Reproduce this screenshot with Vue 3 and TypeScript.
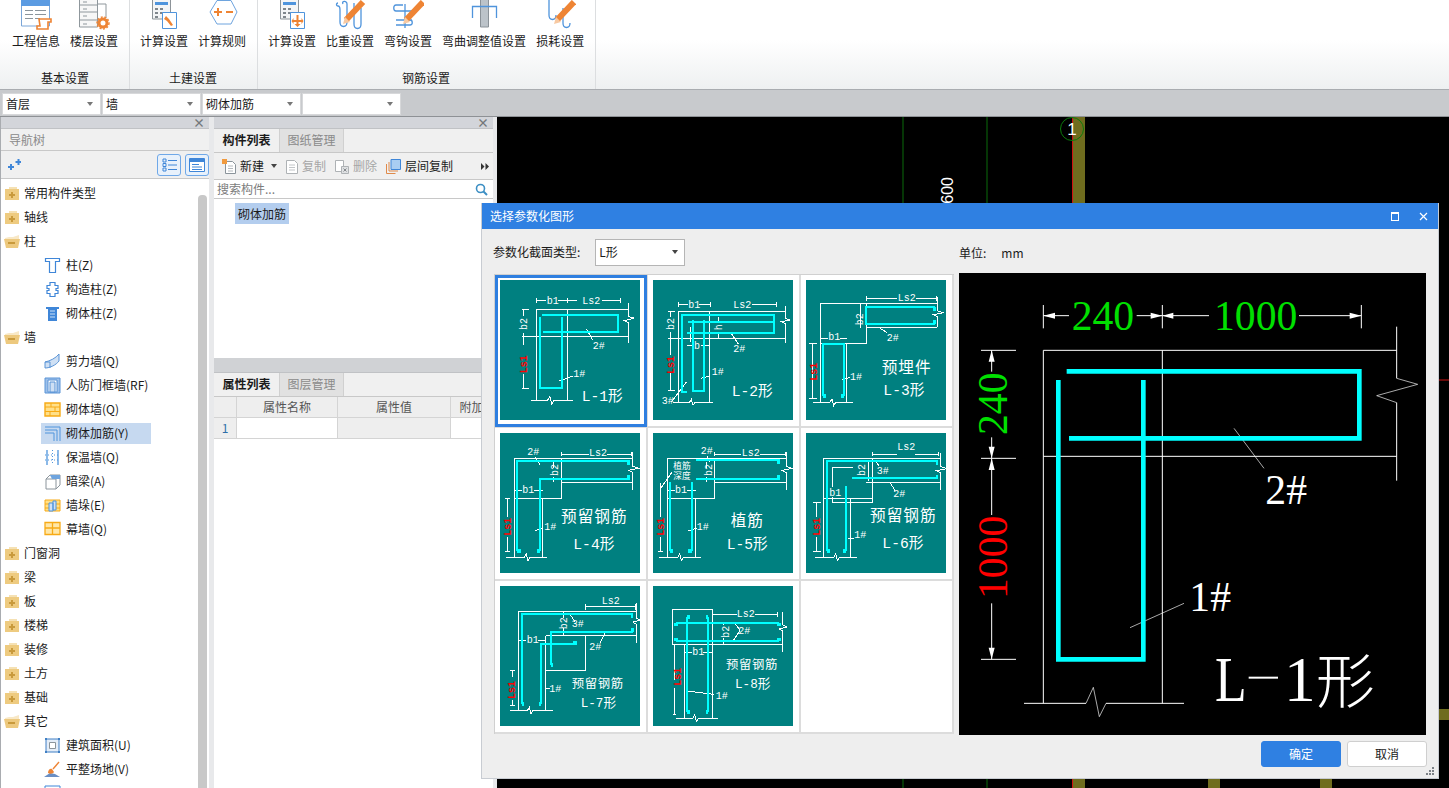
<script setup lang="ts">
// --- Ribbon ---
const pencil = (x: number, y: number) =>
  `<path d="M${x} ${y}l17-18" stroke="#ee8434" stroke-width="6" fill="none"/><path d="M${x - 3} ${y + 4}l2-7 5 5z" fill="#f7c9a2"/>`
const calc =
  '<path d="M4.5 -3h18v22h-18z" fill="#f4f5f6" stroke="#8d9499"/><path d="M7 2h13v3H7z" fill="#4f94dc"/><path d="M7 8h3v2H7zm5 0h3v2h-3zM7 12h3v2H7zm5 0h3v2h-3zM7 16h3v2H7z" fill="#7f868c"/><path d="M14.5 12.5h14v16h-14z" fill="#fff" stroke="#4f94dc"/>'

const ribbonIcons: Record<string, string> = {
  info: '<path d="M1.5 -3h28v29h-28z" fill="#fff" stroke="#7ba6d8"/><path d="M1 0h29v6H1z" fill="#5b9be2"/><path d="M5 10h8v1H5zm10 0h11v1H15zM5 14h8v1H5zm10 0h11v1H15zM5 18h8v1H5zm10 0h5v1h-5z" fill="#8b949b"/><path d="M19 19h12v3h-3v7H17v-3h3z" fill="#fff" stroke="#ee8434" stroke-width="1.6"/>',
  floor: '<path d="M1.5 -3h18v30h-18z" fill="#f7f7f7" stroke="#8f979c"/><path d="M19 4h9v14" fill="none" stroke="#8f979c"/><path d="M2 5h17M2 12h17M2 20h17" stroke="#8f979c"/><path d="M5 2h4M5 9h4M5 16h4M5 24h4" stroke="#8f979c"/><circle cx="25" cy="23" r="4" fill="#fff" stroke="#ee8434" stroke-width="3"/><circle cx="25" cy="23" r="6" fill="none" stroke="#ee8434" stroke-width="1.4" stroke-dasharray="2 1.6"/>',
  calcTool: calc + '<path d="M18 16l3 3 4 6-2 1-4-5-3-2z" fill="#ee8434"/>',
  rule: '<path d="M4 12L11 .5h14L31 12l-6 12H11z" fill="#fff" stroke="#6ea4de"/><path d="M8 11h3V8h2v3h3v2h-3v3h-2v-3H8zm12 0h7v2h-7z" fill="#ee8434"/>',
  calcRebar: calc + '<path d="M20.5 15h2v5h3v-2l2 3-2 3v-2h-3v2h2l-3 3-3-3h2v-2h-3v2l-2-3 2-3v2h3z" fill="#ee8434"/>',
  density:
    '<path d="M4 3c-2 0-2 3 0 3s2 2 2 4v12c0 6 7 6 7 0V4c0-4-6-3-4 0M20 3v21c0 6 7 6 7 0V8" fill="none" stroke="#4f94dc" stroke-width="1.3"/>' + pencil(12, 20),
  hook:
    '<path d="M11 5H4c-3 0-3 6 0 6h16M4 20h16M4 25h14c3 0 3-5 0-5M13 4v24" fill="none" stroke="#4f94dc" stroke-width="1.3"/>' + pencil(14, 20),
  bend: '<path d="M12.5 -2h8v29h-8z" fill="#bcc3c9" stroke="#8b9298"/><path d="M4.5 18V6.5h24V18" fill="none" stroke="#4f94dc" stroke-width="1.3"/>',
  loss:
    '<path d="M5 0v15c0 6 7 6 7 0M19 8v15c0 6 7 6 7 0" fill="none" stroke="#4f94dc" stroke-width="1.3"/>' + pencil(13, 20),
}

const groups = [
  { name: '基本设置', cls: 'first', items: [['工程信息', 'info'], ['楼层设置', 'floor']] },
  { name: '土建设置', cls: '', items: [['计算设置', 'calcTool'], ['计算规则', 'rule']] },
  {
    name: '钢筋设置',
    cls: '',
    items: [['计算设置', 'calcRebar'], ['比重设置', 'density'], ['弯钩设置', 'hook'], ['弯曲调整值设置', 'bend'], ['损耗设置', 'loss']],
  },
]

const combos = ['首层', '墙', '砌体加筋', '']

// --- Navigation tree ---
const treeIcons: Record<string, string> = {
  plus: '<path fill="#f5e1b4" d="M5 2h8v2H5z"/><path fill="#eecb80" d="M1 4h14v11H1z"/><path fill="#c99a3c" d="M7 7h2v2h2v2H9v2H7v-2H5V9h2z"/>',
  minus: '<path fill="#f8e8c6" d="M1 5l4-1h4l6-2v4H1z"/><path fill="#edc97e" d="M0 6h16l-2 9H2z"/><path fill="#c99a3c" d="M4 9h7v2H4z"/>',
  col: '<path d="M1.5 1.5h14v3h-4v11h-6v-11h-4z" fill="#fff" stroke="#3f86d8" stroke-width="1.2"/>',
  gz: '<path d="M6 1.5h5v3h3v3h-2v2h2v3h-3v3H6v-3H3V9.500h2v-2H3v-3h3z" fill="#fff" stroke="#3f86d8" stroke-width="1.2"/>',
  qtz: '<path d="M2 2h13v2h-2v12H4V4H2z" fill="#3f86d8"/><path d="M6 6h5M6 9h5M6 12h5" stroke="#cfe2f7"/>',
  jlq: '<path d="M1 9C6 8 12 5 15 1v7c-3 4-9 7-14 7z" fill="#cfe0f4" stroke="#5a94d6"/><path d="M1 9h5v6" fill="none" stroke="#5a94d6"/>',
  rfm: '<path d="M1 1h15v15H1z" fill="#9dc0ea" stroke="#5a94d6"/><path d="M4 3h9v12H4z" fill="#fff" stroke="#5a94d6"/><path d="M6 5h5v10H6z" fill="#cfe0f4" stroke="#5a94d6"/>',
  qtq: '<path d="M1 2h15v13H1z" fill="#ffe08a" stroke="#f7aa16" stroke-width="1.400"/><path d="M1 6h15M1 10.500h15M7 2v4M11 6v4.500M6 10.500V15" stroke="#f7aa16"/>',
  jj: '<path d="M1 2h15v14M1 5h12v11M1 8h9v8" fill="none" stroke="#4f94dc"/>',
  bwq: '<path d="M3 1v15M14 1v15" stroke="#4f94dc" stroke-width="1.300"/><path d="M8.500 1v15M1 6h15M1 11h15" stroke="#4f94dc" stroke-dasharray="1 2" fill="none"/>',
  al: '<path d="M2 6l4-4h10v10l-4 4H2z" fill="#fff" stroke="#8b949b"/><path d="M2 6h10v10M12 6l4-4" fill="none" stroke="#8b949b"/><path d="M6 2h10v4H8z" fill="#6ea4de"/>',
  qd: '<path d="M1 3h15v11H1z" fill="#ffe08a" stroke="#f7aa16"/><path d="M1 7h15M1 11h15" stroke="#f7aa16"/><path d="M5 6h4v8H5z M9 4h3v9H9z" fill="#cfe0f4" stroke="#4f94dc"/>',
  mq: '<path d="M1 1.500h15v12H1z" fill="#ffe7a8" stroke="#f7aa16" stroke-width="1.300"/><path d="M1 7h15M8.500 1.500v12" stroke="#f7aa16" stroke-width="1.300"/>',
  area: '<path d="M2 2h13v13H2z" fill="#e4edf8" stroke="#3f7fc4"/><path d="M5.500 5.500h6v6h-6z" fill="#fff" stroke="#8b949b"/><path d="M1 1h2v2H1zm13 0h2v2h-2zM1 14h2v2H1zm13 0h2v2h-2z" fill="#3f7fc4"/>',
  site: '<path d="M0 16l6-4 5 1 5 3z" fill="#6a8fc4"/><path d="M4 12c0-3 2-5 4-4l2 3c-1 2-4 2-6 1z" fill="#ee8434"/><path d="M9 8l6-7" stroke="#ee8434" stroke-width="1.400"/>',
  box: '<path d="M1 1h15v15H1z" fill="#fff" stroke="#3f86d8"/>',
}

const tree = [
  ['常用构件类型', 'plus'], ['轴线', 'plus'], ['柱', 'minus'],
  ['柱(Z)', 'col', 1], ['构造柱(Z)', 'gz', 1], ['砌体柱(Z)', 'qtz', 1],
  ['墙', 'minus'],
  ['剪力墙(Q)', 'jlq', 1], ['人防门框墙(RF)', 'rfm', 1], ['砌体墙(Q)', 'qtq', 1], ['砌体加筋(Y)', 'jj', 2],
  ['保温墙(Q)', 'bwq', 1], ['暗梁(A)', 'al', 1], ['墙垛(E)', 'qd', 1], ['幕墙(Q)', 'mq', 1],
  ['门窗洞', 'plus'], ['梁', 'plus'], ['板', 'plus'], ['楼梯', 'plus'], ['装修', 'plus'], ['土方', 'plus'], ['基础', 'plus'],
  ['其它', 'minus'], ['建筑面积(U)', 'area', 1], ['平整场地(V)', 'site', 1], ['', 'box', 1],
] as [string, string, number?][]

// --- Parametric thumbnails, drawn in 3x units ---
interface Label { x: number; y: number; t: string; k: string }
const L = (x: number, y: number, t: string, k = 's'): Label => ({ x, y, t, k })

const thumbs = [
  {
    ox: 30, oy: 30,
    w: 'M140 84v16M232 84v16M390 84v16M140 92h28M205 92h55M335 92h55M138 118H415M95 200H415M138 118V392M232 118V392M415 100v40l18 4-30 8 12 6v62M122 392h50l8-12 5 22 6-10h57M95 118h23M95 355h23M100 118v20M100 190v35M100 312v43M290 178l18 32M208 333l40-15',
    c: 'M155 134H385V186H160M150 142V355H217V142',
    l: [L(170, 102, 'b1'), L(277, 102, 'Ls2'), L(111, 162, 'b2', 'v'), L(111, 283, 'Ls1', 'red'), L(308, 236, '2#'), L(250, 320, '1#'), L(275, 392, 'L-1形', 'cap')],
  },
  {
    ox: 489, oy: 30,
    w: 'M565 96v16M660 96v16M858 96v16M565 104h28M628 104h32M785 104h73M565 125H885M535 206H885M565 125V398M658 125V398M885 108v36l14 6-24 5 10 6v59M550 398h48l6-10 5 18 6-8h55M535 125h20M535 206h20M535 362h20M541 125v15M541 185v70M541 310v52M685 142v14M685 185v18M590 226h20M632 226h28M632 325l28-7M720 185l25 37M590 335l-45 60M600 170v45',
    c: 'M853 157V134H577V365H590M595 157H853V190H590M608 150V362H642V150',
    l: [L(595, 114, 'b1'), L(730, 114, 'Ls2'), L(552, 162, 'b2', 'v'), L(552, 285, 'Ls1', 'red'), L(697, 172, 'h', 'v'), L(612, 236, 'b'), L(665, 315, '1#'), L(730, 245, '2#'), L(515, 402, '3#'), L(725, 378, 'L-2形', 'cap')],
  },
  {
    ox: 818, oy: 30,
    w: 'M1000 78v14M1208 78v14M1000 85h92M1148 85h60M862 100H1210M1000 100V220M862 220H1000M862 100V397M940 220V397M1000 172H1212M1212 82v40l18 6-30 6 12 6v32M840 397h50l6-10 5 20 6-10h53M980 100v75M838 220v165M826 220h24M826 385h24M862 205h22M920 205h22M925 330l25-8M1040 175l22 13',
    c: 'M1205 112H998V162H1205M868 378V222H932V378',
    b: 'M1198 118h9M1198 156h9M868 378h10M932 378h-10',
    l: [L(885, 210, 'b1'), L(1093, 92, 'Ls2'), L(990, 148, 'b2', 'v'), L(850, 305, 'Ls1', 'red'), L(950, 330, '1#'), L(1060, 212, '2#'), L(1045, 308, '预埋件', 'big'), L(1050, 375, 'L-3形', 'cap')],
  },
  {
    ox: 30, oy: 24,
    w: 'M215 80v14M425 80v14M215 87h82M350 87h75M72 100H428M215 172H428M72 220H215M72 100V397M215 100V220M158 220V397M428 80v44l18 6-30 6 12 6v53M48 397h55l6-10 5 20 6-10h52M52 220v55M52 335v45M44 220h16M44 380h16M72 197h24M132 197h26M190 112v16M190 155v17M135 317l25-7M135 97l15 21',
    c: 'M82 378V108H420M150 378V163H420',
    b: 'M82 378h10M150 378h-10M412 114h8M412 157h8',
    l: [L(112, 90, '2#'), L(97, 205, 'b1'), L(297, 92, 'Ls2'), L(205, 135, 'b2', 'v'), L(63, 305, 'Ls1', 'red'), L(163, 315, '1#'), L(213, 290, '预留钢筋', 'big'), L(250, 372, 'L-4形', 'cap')],
  },
  {
    ox: 489, oy: 24,
    w: 'M672 80v14M885 80v14M672 87h82M810 87h75M532 100H888M674 172H888M532 220H674M532 100V397M674 100V220M617 220V397M888 80v44l18 6-30 6 12 6v53M508 397h55l6-10 5 20 6-10h52M512 175v100M512 335v45M504 380h16M532 197h22M590 197h27M650 112v16M650 155v17M595 317l25-7M650 92l10 18M512 190l35-50',
    c: 'M618 106H870M618 162H870M540 172V378M605 172V378',
    b: 'M540 378h10M605 378h-10M862 112h8M862 157h8',
    l: [L(632, 86, '2#'), L(755, 92, 'Ls2'), L(550, 133, '植筋', 'mini'), L(550, 162, '深度', 'mini'), L(666, 135, 'b2', 'v'), L(555, 205, 'b1'), L(523, 305, 'Ls1', 'red'), L(620, 315, '1#'), L(722, 302, '植筋', 'big'), L(710, 372, 'L-5形', 'cap')],
  },
  {
    ox: 818, oy: 24,
    w: 'M1018 80v14M1215 80v14M1018 87h72M1145 87h70M870 100H1222M998 172H1222M870 100V397M952 220V397M870 220H1018M1018 100V232M897 128H960M897 128V185M897 215V232M897 232H1018M1222 85v40l18 6-30 6 12 6v52M846 397h55l6-10 5 20 6-10h52M850 232v45M850 335v45M838 232h24M838 380h24M1005 112v55M945 340h18M1025 105l12 18M1070 172l15 25',
    c: 'M880 378V108H1215M955 158H1215M938 183V378',
    b: 'M880 378h10M938 378h-10M1207 114h8M1207 157h8',
    l: [L(888, 212, 'b1'), L(1092, 74, 'Ls2'), L(996, 135, 'b2', 'v'), L(1030, 146, '3#'), L(1080, 217, '2#'), L(861, 305, 'Ls1', 'red'), L(963, 340, '1#'), L(1010, 288, '预留钢筋', 'big'), L(1047, 368, 'L-6形', 'cap')],
  },
  {
    ox: 30, oy: 33,
    w: 'M287 88v16M435 88v16M287 95h150M85 109H438M167 182H438M85 109V407M167 182V407M287 182V287H167M438 85v44l14 6-24 6 10 6v58M60 407h52l6-10 5 20 6-10h60M220 109v20M220 160v22M60 285h14M60 390h14M66 285v20M66 375v15M85 195h24M145 195h22M167 340h12M240 118l15 22M345 175l-15 30',
    c: 'M95 388V117H430M182 270V170H430M153 388V207H260',
    b: 'M95 388h6M153 388h-6M182 270h6M424 124h6M424 166h8M256 197v8',
    l: [L(335, 86, 'Ls2'), L(231, 145, 'b2', 'v'), L(245, 155, '3#'), L(298, 226, '2#'), L(110, 203, 'b1'), L(178, 350, '1#'), L(76, 345, 'Ls1', 'red'), L(245, 338, '预留钢筋', 'big2'), L(272, 395, 'L-7形', 'cap2')],
  },
  {
    ox: 489, oy: 33,
    w: 'M547 103H667V209H547ZM667 118H740M795 118H862M862 110v16M667 209H878M878 110v40l14 6-24 6 10 6v62M583 209V430M667 209V430M558 430h50l6-10 5 20 6-10h58M553 209v105M553 340v78M548 418h10M583 232h22M640 232h27M700 140v10M700 188v21M735 145l15 20M730 197l20-30M592 348l80 10',
    c: 'M557 145H868M557 197H868M592 125V410M655 125V410',
    b: 'M557 152v-7M868 152v-7M557 190v7M868 190v7M592 125h8M655 125h-8M592 410h8M655 410h-8',
    l: [L(740, 125, 'Ls2'), L(716, 170, 'b2', 'v'), L(745, 178, '2#'), L(607, 240, 'b1'), L(573, 305, 'Ls1', 'red'), L(677, 373, '1#'), L(708, 282, '预留钢筋', 'big2'), L(735, 338, 'L-8形', 'cap2')],
  },
]
</script>

<template>
  <div class="app">
    <header class="ribbon">
      <section v-for="g in groups" :key="g.name" class="group" :class="g.cls">
        <div class="tools">
          <div v-for="it in g.items" :key="it[1]" class="tool">
            <svg class="tool-icon" viewBox="0 0 32 30" width="32" height="30" v-html="ribbonIcons[it[1]]" />
            <span>{{ it[0] }}</span>
          </div>
        </div>
        <div class="group-name">{{ g.name }}</div>
      </section>
    </header>

    <div class="combo-bar">
      <div v-for="(c, i) in combos" :key="i" class="combo">
        <span>{{ c }}</span><i class="caret" />
      </div>
    </div>

    <main class="main">
      <aside class="nav">
        <div class="strip"><b class="close">×</b></div>
        <div class="nav-title">导航树</div>
        <div class="nav-tools">
          <svg width="13" height="11" viewBox="0 0 13 11"><path d="M7.500 2h2V0h2v2H13v2h-1.500v2h-2V4h-2zM0 7h2V5h2v2h2v2H4v2H2V9H0z" fill="#3f86d8" /></svg>
          <span class="spacer" />
          <button class="view-btn" type="button">
            <svg width="15" height="14" viewBox="0 0 15 14"><path d="M1 1h3v3H1zM1 5.500h3v3H1zM1 10h3v3H1z" fill="none" stroke="#3f86d8" /><path d="M6 2.500h9M6 7h9M6 11.500h9" stroke="#3f86d8" /></svg>
          </button>
          <button class="view-btn" type="button">
            <svg width="16" height="14" viewBox="0 0 16 14"><path d="M.5.500h15v13H.5z" fill="#fff" stroke="#3f86d8" /><path d="M1 1h14v3H1z" fill="#3f86d8" /><path d="M3 6.500h7M3 9h10M3 11.500h10" stroke="#3f86d8" /></svg>
          </button>
        </div>
        <div class="tree">
          <div v-for="(n, i) in tree" :key="i" class="row" :class="{ child: n[2], sel: n[2] === 2 }">
            <div class="row-in">
              <svg class="row-icon" viewBox="0 0 17 17" width="17" height="17" v-html="treeIcons[n[1]]" />
              <span>{{ n[0] }}</span>
            </div>
          </div>
          <i class="scroll" />
        </div>
      </aside>

      <section class="mid">
        <div class="strip"><b class="close">×</b></div>
        <div class="tabs">
          <span class="tab on">构件列表</span><span class="tab">图纸管理</span>
        </div>
        <div class="mid-tools">
          <span class="mt">
            <svg width="14" height="15" viewBox="0 0 14 15"><path d="M3.500 2.500h7l3 3v9h-10z" fill="#fff" stroke="#8b949b" /><path d="M6 7h5M6 9.500h5M6 12h5" stroke="#b4b9bd" /><path d="M0 0h5v5H0z" fill="#f19a3e" /></svg>
            新建 <i class="caret dark" />
          </span>
          <span class="mt off">
            <svg width="12" height="15" viewBox="0 0 12 15"><path d="M.5 1.500h8l3 3v10H.5z" fill="#fff" stroke="#aeb2b5" /><path d="M3 6h6M3 8.500h6M3 11h6" stroke="#c2c5c8" /></svg>
            复制
          </span>
          <span class="mt off">
            <svg width="14" height="15" viewBox="0 0 14 15"><path d="M.5 1.500h8v11h-8z" fill="#fff" stroke="#aeb2b5" /><path d="M6.500 7.500h7v7h-7z" fill="#dfe1e3" stroke="#aeb2b5" /><path d="M8.500 9.500l3 3m0-3l-3 3" stroke="#85898d" /></svg>
            删除
          </span>
          <span class="mt">
            <svg width="15" height="15" viewBox="0 0 15 15"><path d="M.5 5v9.500h9M3 3v9h9" fill="none" stroke="#e08a4a" /><path d="M5 .5h9.500v10H5z" fill="#a9cdf2" stroke="#3f86d8" /></svg>
            层间复制
          </span>
          <span class="spacer" />
          <svg width="8" height="7" viewBox="0 0 8 7"><path d="M0 0l3.500 3.500L0 7zM4.500 0L8 3.500 4.500 7z" fill="#333" /></svg>
        </div>
        <div class="search">
          <span>搜索构件...</span>
          <svg width="13" height="13" viewBox="0 0 13 13"><circle cx="5.500" cy="5.500" r="4" fill="none" stroke="#3d8fc4" stroke-width="1.600" /><path d="M8.500 8.500l3.500 3.500" stroke="#3d8fc4" stroke-width="2" /></svg>
        </div>
        <div class="comp-list"><span class="comp">砌体加筋</span></div>
        <div class="sash" />
        <div class="tabs">
          <span class="tab on">属性列表</span><span class="tab">图层管理</span>
        </div>
        <div class="props">
          <div class="prop-row head">
            <span class="c0" /><span class="c1">属性名称</span><span class="c2">属性值</span><span class="c3">附加</span>
          </div>
          <div class="prop-row">
            <span class="c0 num">1</span><span class="c1 blank" /><span class="c2 grey" /><span class="c3 blank" />
          </div>
        </div>
      </section>

      <div class="canvas">
        <svg class="cad" viewBox="0 0 952 671" width="952" height="671">
          <path d="M406 0V671M490 0V671" stroke="#0b6a0b" fill="none" />
          <path d="M576 0h12v671h-12z" fill="#6f6c1e" />
          <path d="M575.500 0V671" stroke="#d01212" />
          <circle cx="575" cy="12" r="11.500" fill="none" stroke="#0b7a0b" />
          <text x="575" y="18" class="cad-t one">1</text>
          <text x="0" y="0" class="cad-t six" transform="translate(456 60) rotate(-90)" text-anchor="end">3600</text>
          <path d="M711 660h12v11h-12zM823 660h12v11h-12zM942 592h10v11h-10z" fill="#6f6c1e" />
          <path d="M940 263h12" stroke="#d01212" />
        </svg>
      </div>
    </main>

    <div class="dialog">
      <div class="dlg-title">
        <span>选择参数化图形</span>
        <span class="spacer" />
        <i class="dlg-max" />
        <svg class="dlg-x" width="9" height="9" viewBox="0 0 9 9"><path d="M1 1l7 7m0-7l-7 7" stroke="#fff" stroke-width="1.200" /></svg>
      </div>
      <div class="dlg-body">
        <div class="dlg-left-top">
          <span>参数化截面类型:</span>
          <div class="type-select"><span>L形</span><i class="caret dark" /></div>
        </div>
        <div class="dlg-unit"><span>单位:</span><span>mm</span></div>

        <div class="grid">
          <div v-for="(t, i) in thumbs" :key="i" class="cell" :class="{ picked: i === 0 }">
            <svg class="thumb" :viewBox="`${t.ox} ${t.oy} 420 420`" width="140" height="140">
              <path :d="t.w" class="w" />
              <path :d="t.c" class="c" />
              <path v-if="t.b" :d="t.b" class="blob" />
              <text
                v-for="(x, j) in t.l" :key="j" :x="x.x" :y="x.y" :class="x.k"
                :transform="x.k === 'v' || x.k === 'red' ? `rotate(-90 ${x.x} ${x.y})` : undefined"
              >{{ x.t }}</text>
            </svg>
          </div>
          <div class="cell" />
        </div>

        <div class="preview">
          <svg viewBox="-3 -6 1404 1386" width="468" height="462">
            <path class="thin" d="M250 90v70M607 90v70M1204 90v70M250 122h77M530 122h77M607 122h140M1017 122h187M250 226H1310M250 544H1310M250 226V1285M607 226V1285M1310 155V310M1310 383V617M192 1285H378M438 1285H672M63 226H168M63 550H168M63 1153H168M95 226v64M95 487v63M95 550v170M95 985v168" />
            <path class="hair" d="M510 1058L672 985M822 460L912 580M1310 310l63 18-123 34 60 21M378 1285L400 1237 418 1325 438 1285" />
            <path class="arrow" d="M250 122l35-9v18zM607 122l-35-9v18zM607 122l33-9v18zM1204 122l-35-9v18zM95 226l-9 34h18zM95 550l-9-35h18zM95 550l-9 35h18zM95 1153l-9-35h18z" />
            <path class="bar" d="M320 289H1198V490H327M295 315V1153H550V315" />
            <text x="335" y="165" class="dim green">240</text>
            <text x="762" y="165" class="dim green">1000</text>
            <text x="141" y="480" class="dim green" transform="rotate(-90 141 480)">240</text>
            <text x="141" y="972" class="dim red-t" transform="rotate(-90 141 972)">1000</text>
            <text x="688" y="1008" class="dim white">1#</text>
            <text x="916" y="688" class="dim white">2#</text>
            <text x="765" y="1278" class="title white" textLength="95" lengthAdjust="spacingAndGlyphs">L</text>
            <path class="bar-w" d="M866 1208h88" />
            <text x="972" y="1278" class="title white">1</text>
            <text x="1068" y="1283" class="title-cn">形</text>
          </svg>
        </div>
      </div>
      <div class="dlg-foot">
        <button class="btn primary" type="button">确定</button>
        <button class="btn" type="button">取消</button>
      </div>
      <svg class="grip" width="9" height="9" viewBox="0 0 9 9"><path d="M6 0h2v2H6zM3 3h2v2H3zM6 3h2v2H6zM0 6h2v2H0zM3 6h2v2H3zM6 6h2v2H6z" fill="#7d8287" /></svg>
    </div>
  </div>
</template>

<style>
html, body { margin: 0; overflow: hidden; background: #000; }
</style>

<style scoped>
.app {
  position: relative;
  width: 1449px;
  height: 788px;
  display: flex;
  flex-direction: column;
  overflow: hidden;
  font: 12px/16px "Noto Sans CJK SC", "Liberation Sans", sans-serif;
  color: #1b1b1b;
  background: #e8e9eb;
}
.spacer { flex: 1; }

/* ribbon */
.ribbon {
  height: 89px;
  flex: none;
  display: flex;
  background: linear-gradient(#fff 45%, #eef0f1);
  border-bottom: 1px solid #a9acb0;
}
.group {
  display: flex;
  flex-direction: column;
  padding: 0 11px 0 10px;
  border-right: 1px solid #dcdee0;
}
.group.first { padding-left: 12px; }
.tools { display: flex; gap: 10px; height: 70px; }
.tool { display: flex; flex-direction: column; align-items: center; }
.tool-icon { display: block; flex: none; margin-bottom: 3px; overflow: hidden; }
.group-name { text-align: center; line-height: 16px; }

/* combos */
.combo-bar {
  height: 27px;
  flex: none;
  display: flex;
  gap: 1px;
  padding: 3px 2px 0;
  box-sizing: border-box;
  background: #c8cacd;
  border-bottom: 1px solid #8e9195;
}
.combo {
  width: 99px;
  height: 22px;
  box-sizing: border-box;
  display: flex;
  align-items: center;
  justify-content: space-between;
  padding: 0 7px 0 3px;
  background: #fff;
  border: 1px solid #d7d8da;
}
.caret {
  width: 0;
  height: 0;
  border: 3px solid transparent;
  border-top: 4px solid #777;
  border-bottom: 0;
}
.caret.dark { border-top-color: #444; }

/* panels */
.main { flex: 1; display: flex; min-height: 0; }
.strip {
  height: 12px;
  box-sizing: border-box;
  background: #d3d5da;
  border-bottom: 1px solid #c0c2c5;
  display: flex;
  justify-content: flex-end;
}
.close {
  font-size: 12px;
  line-height: 11px;
  color: #73777b;
  margin-right: 4px;
}
.nav {
  width: 208px;
  flex: none;
  margin-right: 5px;
  border-left: 1px solid #a9acb0;
  background: #fff;
  display: flex;
  flex-direction: column;
}
.nav-title {
  height: 21px;
  line-height: 21px;
  padding-left: 8px;
  color: #8a8a8a;
  background: #f0f0f0;
  border-bottom: 1px solid #c8c8c8;
}
.nav-tools {
  height: 27px;
  display: flex;
  align-items: center;
  gap: 4px;
  padding: 0 0 0 7px;
  background: #f0f0f0;
  border-bottom: 1px solid #c8c8c8;
}
.view-btn {
  width: 24px;
  height: 22px;
  padding: 0;
  display: flex;
  align-items: center;
  justify-content: center;
  background: #e8f1fb;
  border: 1px solid #6fa8e8;
  border-radius: 3px;
}
.tree { position: relative; flex: 1; min-height: 0; overflow: hidden; padding-top: 2px; }
.row { height: 24px; display: flex; align-items: center; padding-left: 3px; }
.row-in { display: flex; align-items: center; gap: 3px; height: 21px; }
.row-icon { flex: none; }
.row.child { padding-left: 40px; }
.row.child .row-in { padding-left: 3px; gap: 5px; }
.row.sel .row-in { width: 107px; background: #c6d9f0; }
.scroll {
  position: absolute;
  left: 197px;
  top: 16px;
  bottom: 0;
  width: 9px;
  border-radius: 4px 4px 0 0;
  background: #c8c8c8;
}

.mid {
  width: 279px;
  flex: none;
  margin-right: 4px;
  background: #fff;
  display: flex;
  flex-direction: column;
}
.tabs {
  height: 23px;
  flex: none;
  display: flex;
  background: #f0f0f0;
  border-bottom: 1px solid #c8c8c8;
}
.tab {
  width: 65px;
  text-align: center;
  line-height: 22px;
  color: #8a8a8a;
  background: #e1e1e1;
  border-left: 1px solid #d0d0d0;
  border-right: 1px solid #d0d0d0;
  box-sizing: border-box;
}
.tab.on { background: #f0f0f0; color: #1b1b1b; font-weight: 700; border: 0; }
.mid-tools {
  height: 27px;
  flex: none;
  display: flex;
  align-items: center;
  gap: 6px;
  padding: 0 4px 0 8px;
  background: #f0f0f0;
  border-bottom: 1px solid #c8c8c8;
  box-sizing: border-box;
}
.mt { display: inline-flex; align-items: center; gap: 4px; margin-right: 3px; }
.mt .caret { margin-left: 3px; }
.mt.off { color: #a6a6a6; }
.search {
  height: 19px;
  flex: none;
  display: flex;
  align-items: center;
  justify-content: space-between;
  padding: 0 5px 0 3px;
  color: #7c7c7c;
  border-bottom: 1px solid #c8c8c8;
  box-sizing: border-box;
}
.comp-list { height: 159px; flex: none; padding: 4px 0 0 21px; box-sizing: border-box; }
.comp { display: inline-block; padding: 0 3px; line-height: 21px; background: #b3cdee; }
.sash { height: 15px; flex: none; background: #d0d2d5; border-bottom: 1px solid #c0c2c5; box-sizing: border-box; }
.prop-row { display: flex; height: 21px; line-height: 20px; }
.prop-row span { box-sizing: border-box; border-right: 1px solid #d4d4d4; border-bottom: 1px solid #d4d4d4; text-align: center; color: #555; }
.prop-row.head span { background: #eeeeee; }
.c0 { width: 23px; }
.c1 { width: 101px; }
.c2 { width: 113px; }
.c3 { flex: 1; }
.num { color: #2e6ea8 !important; background: #eee; }
.grey { background: #eee; }

.canvas { flex: 1; background: #000; overflow: hidden; }
.cad { display: block; }
.cad-t { fill: #fff; font-family: "Liberation Sans", sans-serif; }
.one { font-size: 17px; text-anchor: middle; }
.six { font-size: 16px; }

/* dialog */
.dialog {
  position: absolute;
  left: 481px;
  top: 203px;
  width: 958px;
  height: 576px;
  box-sizing: border-box;
  display: flex;
  flex-direction: column;
  background: #eeeeee;
  border: 1px solid #c8ccd2;
  border-top: 0;
}
.dlg-title {
  height: 26px;
  flex: none;
  display: flex;
  align-items: center;
  padding: 0 10px 0 8px;
  color: #fff;
  background: #2f80e2;
}
.dlg-max {
  width: 6px;
  height: 6px;
  margin-right: 20px;
  border: 1px solid #fff;
  border-top-width: 2px;
}
.dlg-body {
  flex: 1;
  display: grid;
  grid-template-columns: 460px 468px;
  grid-template-rows: 44px 461px;
  column-gap: 5px;
  padding-left: 11px;
}
.dlg-left-top { display: flex; align-items: center; gap: 15px; padding-top: 2px; }
.type-select {
  width: 90px;
  height: 27px;
  box-sizing: border-box;
  display: flex;
  align-items: center;
  justify-content: space-between;
  padding: 0 6px 0 3px;
  background: #fff;
  border: 1px solid #b5b5b5;
}
.dlg-unit { display: flex; align-items: center; gap: 15px; padding: 3px 0 0 1px; }
.grid {
  display: grid;
  grid-template-columns: repeat(3, 153px);
  grid-auto-rows: 153px;
  width: 460px;
  height: 460px;
  margin: 1px 0 0 1px;
  box-sizing: border-box;
  background: #fff;
  border-top: 1px solid #d0d0d0;
  border-left: 1px solid #d0d0d0;
}
.cell {
  position: relative;
  box-sizing: border-box;
  padding: 5px;
  border-right: 2px solid #dcdcdc;
  border-bottom: 2px solid #dcdcdc;
}
.cell.picked::after {
  content: "";
  position: absolute;
  inset: 0 -1px -1px 0;
  border: 3px solid #2f7fe0;
}
.thumb { display: block; background: #008080; }
.w { fill: none; stroke: #fff; stroke-width: 3; shape-rendering: crispEdges; }
.c { fill: none; stroke: #00ffff; stroke-width: 6; shape-rendering: crispEdges; }
.blob { fill: none; stroke: #00ffff; stroke-width: 12; shape-rendering: crispEdges; }
.thumb text { fill: #fff; font-family: "Liberation Mono", "Noto Sans CJK SC", monospace; }
.s { font-size: 30px; }
.v { font-size: 30px; text-anchor: middle; }
.red { font-size: 30px; font-weight: 700; text-anchor: middle; fill: #ff0000 !important; }
.cap { font-size: 44px; }
.cap2 { font-size: 38px; }
.big { font-size: 47px; letter-spacing: 3px; }
.big2 { font-size: 37px; letter-spacing: 2px; }
.mini { font-size: 26px; }

.preview { background: #000; height: 462px; margin-left: 1px; }
.preview svg { display: block; }
.thin { fill: none; stroke: #fff; stroke-width: 3; }
.hair { fill: none; stroke: #fff; stroke-width: 2; }
.arrow { fill: #fff; }
.bar { fill: none; stroke: #00ffff; stroke-width: 14; stroke-linejoin: miter; }
.bar-w { stroke: #fff; stroke-width: 6; }
.dim { font-family: "Liberation Serif", serif; font-size: 125px; }
.title { font-family: "Liberation Serif", serif; font-size: 190px; }
.title-cn { font-family: "Noto Sans CJK SC", sans-serif; font-size: 176px; font-weight: 300; fill: #fff; }
.green { fill: #00e000; }
.red-t { fill: #ff0000; }
.white { fill: #fff; }

.dlg-foot {
  height: 43px;
  flex: none;
  display: flex;
  justify-content: flex-end;
  gap: 6px;
  padding: 6px 11px 0 0;
  box-sizing: border-box;
}
.btn {
  width: 80px;
  height: 26px;
  padding: 0;
  font: inherit;
  color: #1b1b1b;
  background: #fff;
  border: 1px solid #cfcfcf;
  border-radius: 3px;
}
.btn.primary { color: #fff; background: #2f80e2; border-color: #2f80e2; }
.grip { position: absolute; right: 3px; bottom: 2px; }
</style>
